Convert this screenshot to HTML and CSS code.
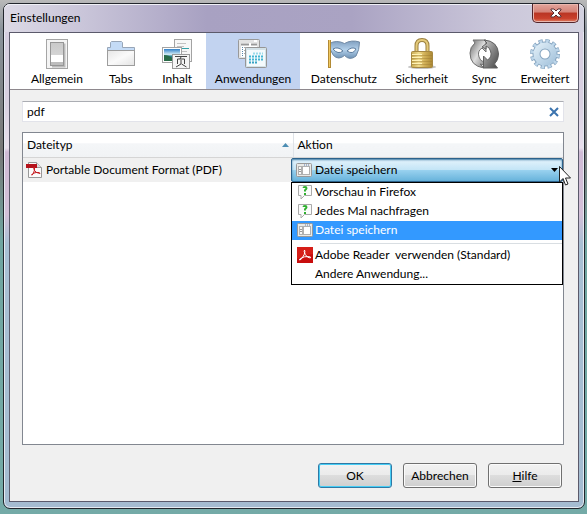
FILE: index.html
```html
<!DOCTYPE html>
<html lang="de">
<head>
    <meta charset="UTF-8">
    <meta name="viewport" content="width=device-width, initial-scale=1.0">
    <title>Einstellungen</title>
    <link rel="stylesheet" href="styles.css">
</head>
<body>

<!-- shared icons -->
<svg class="defs" aria-hidden="true">
  <symbol id="icon-save" viewBox="0 0 16 16">
    <rect x="0.5" y="1.5" width="15" height="13" rx="1" fill="#e9e9e6" stroke="#999" />
    <path d="M8 3h1M10 3h1M12 3h1" stroke="#5c7fb5" />
    <rect x="2.5" y="4.5" width="3" height="8" fill="#f7f7f7" stroke="#b0b0b0" />
    <path d="M3 7.500h2M3 9.500h2" stroke="#999" />
    <rect x="6.500" y="4.500" width="7" height="8" fill="#fff" stroke="#b0b0b0" />
  </symbol>
  <symbol id="icon-ask" viewBox="0 0 16 16">
    <path d="M1.500 1.500h13v10h-7l-3.500 3.500v-3.500h-2.500z" fill="#fbfbfb" stroke="#aaa" />
    <path d="M6.500 4q0-1 1.500-1t1.500 1.200q0 .8-1.500 2v1.300" fill="none" stroke="#2fb02f" stroke-width="2" />
    <path d="M7 9h2v2h-2z" fill="#2fb02f" />
  </symbol>
  <symbol id="icon-reader" viewBox="0 0 16 16">
    <rect width="16" height="16" fill="#c80d0d" />
    <path d="M0 0h16v7q-8 1-16 5z" fill="#df2a20" opacity=".6" />
    <path d="M7.500 3q-1 1 .8 4.500 2 3.500 5 3.500 1.500-.8-1.500-1.500-4.500-.3-8.500 2-1.800 1.800-.3 1.500 2-.8 4.200-5.500 1.300-3.500.3-4.500z" fill="none" stroke="#fff" />
  </symbol>
</svg>

<main class="window">
  <header class="titlebar">
    <h1>Einstellungen</h1>
    <button class="close" type="button" aria-label="Schließen">
      <svg width="12" height="10" viewBox="0 0 12 10">
        <path d="M1 1h3l2 2 2-2h3v1l-3 3 3 3v1h-3l-2-2-2 2h-3v-1l3-3-3-3z" fill="#fff" stroke="#5b3035" />
      </svg>
    </button>
  </header>

  <div class="content">
    <nav class="toolbar">
      <button class="tab" type="button">
        <svg width="32" height="32" viewBox="0 0 32 32">
          <defs>
            <linearGradient id="switch" x2="0" y2="1">
              <stop offset="0" stop-color="#c9c9c9" />
              <stop offset="1" stop-color="#dedede" />
            </linearGradient>
          </defs>
          <rect x="5.500" y="1.500" width="21" height="29" fill="#f4f4f4" stroke="#a5a5a5" />
          <path d="M11 28.500h12.500v-23" fill="none" stroke="#bbb" stroke-width="2" />
          <rect x="9.500" y="4.500" width="13" height="23" fill="url(#switch)" stroke="#969696" />
          <path d="M10 17h12v7h-12z" fill="#fff" />
          <path d="M10 24h12v3h-12z" fill="#bdbdbd" />
        </svg>
        Allgemein
      </button>
      <button class="tab" type="button">
        <svg width="32" height="32" viewBox="0 0 32 32">
          <defs>
            <linearGradient id="folder" x2="1" y2="1">
              <stop offset="0" stop-color="#e6e6e6" />
              <stop offset=".5" stop-color="#fafafa" />
              <stop offset="1" stop-color="#e3e3e3" />
            </linearGradient>
          </defs>
          <path d="M2.500 13v-3.500h3v-5l1-1h10l1 1v5h12v3.500" fill="#c4dbf6" stroke="#98a6b8" />
          <rect x="2.500" y="12.500" width="27" height="15" fill="url(#folder)" stroke="#9d9d9d" />
        </svg>
        Tabs
      </button>
      <button class="tab" type="button">
        <svg width="32" height="32" viewBox="0 0 32 32">
          <defs>
            <linearGradient id="photo" x2="0" y2="1">
              <stop offset="0" stop-color="#2f7fc8" />
              <stop offset=".45" stop-color="#d5edf5" />
              <stop offset=".6" stop-color="#2d8699" />
              <stop offset="1" stop-color="#174e6e" />
            </linearGradient>
          </defs>
          <rect x="13.500" y="1.500" width="17" height="22" fill="#f7f7f7" stroke="#a3a3a3" />
          <path d="M16 5.500h9M16 8.500h7M20 13.500h6" stroke="#c2c2c2" />
          <path d="M20 10.500h8" stroke="#35a1a8" />
          <rect x="1.500" y="9.500" width="19" height="15" fill="#fff" stroke="#a3a3a3" />
          <rect x="3" y="11" width="16" height="12" fill="url(#photo)" />
          <path d="M3 17q5 0 8 3l8 1v2h-16z" fill="#286b47" />
          <rect x="11.500" y="16.500" width="17" height="14" fill="#f5f5f5" stroke="#999" />
          <path d="M14 18.500h12M20 19l-1 2M16.500 26v-5h7v5M20 22v4l-5 3M20.500 26l5 3" fill="none" stroke="#444" />
        </svg>
        Inhalt
      </button>
      <button class="tab selected" type="button" aria-current="page">
        <svg width="32" height="32" viewBox="0 0 32 32">
          <rect x="1.500" y="1.500" width="21" height="19" rx="1" fill="#e3e3e3" stroke="#999" />
          <rect x="4" y="5" width="16" height="14" fill="#fff" />
          <path d="M17 3h3" stroke="#fff" stroke-width="2" />
          <path d="M4 6.500h16" stroke="#999" stroke-width="2" stroke-dasharray="8 2" />
          <path d="M5.500 9v9" stroke="#5686ac" stroke-dasharray="1 1" />
          <path d="M7 9.500h3M7 12.500h2M7 15.500h3" stroke="#aaa" />
          <rect x="8.500" y="9.500" width="21" height="20" rx="1" fill="#d4e2e8" stroke="#969696" />
          <rect x="10" y="12" width="18" height="16" fill="#f4fafc" />
          <path d="M16 15.500h10" stroke="#9bdbeb" stroke-width="2" stroke-dasharray="2 1" />
          <path d="M12 18.500h14M12 21.500h14" stroke="#43b5d3" stroke-width="2" stroke-dasharray="2 1" />
          <path d="M12 24.500h8" stroke="#37a3c4" stroke-width="2" stroke-dasharray="2 1" />
        </svg>
        Anwendungen
      </button>
      <button class="tab" type="button">
        <svg width="32" height="32" viewBox="0 0 32 32">
          <defs>
            <linearGradient id="mask" x2="0" y2="1">
              <stop offset="0" stop-color="#809fc0" />
              <stop offset=".5" stop-color="#b3d0ea" />
              <stop offset="1" stop-color="#6e92b5" />
            </linearGradient>
          </defs>
          <path d="M1.500 5.500q7-4 15 0 7-4 15-1.500 0 8-3.500 14-6 5-11.500-.500-6 5-11 0-4-5-4-12z" fill="url(#mask)" stroke="#7089a5" />
          <path d="M5 11q5-3 10 2-5 4-10-2zM19 13q5-5 9-2-3 6-9 2z" fill="#fff" stroke="#5c7c9e" />
          <path d="M1.500 2v28" stroke="#b28a35" stroke-width="3" />
          <path d="M1.500 2v27" stroke="#f0c860" />
        </svg>
        Datenschutz
      </button>
      <button class="tab" type="button">
        <svg width="32" height="32" viewBox="0 0 32 32">
          <defs>
            <linearGradient id="brass" x2="1" y2="0">
              <stop offset="0" stop-color="#c8a94e" />
              <stop offset=".35" stop-color="#f1dc8e" />
              <stop offset=".6" stop-color="#d4b35a" />
              <stop offset="1" stop-color="#ab8835" />
            </linearGradient>
          </defs>
          <ellipse cx="16" cy="29" rx="14" ry="2" fill="#c4c4c4" />
          <path d="M10.500 14v-6q0-6 5.500-6t5.500 6v6" fill="none" stroke="#9b8040" stroke-width="4" />
          <path d="M10.500 14v-6q0-6 5.500-6t5.500 6v6" fill="none" stroke="#e4ca7a" stroke-width="2" />
          <rect x="5.500" y="13.500" width="21" height="16" rx="1" fill="url(#brass)" stroke="#a68842" />
          <path d="M6 17.500h20M6 20.500h20M6 23.500h20M6 26.500h20" stroke="#9a7930" opacity=".4" />
          <path d="M6 16.500h10M6 19.500h10M6 22.500h10M6 25.500h10" stroke="#fff2b5" />
        </svg>
        Sicherheit
      </button>
      <button class="tab" type="button">
        <svg width="32" height="32" viewBox="0 0 32 32">
          <defs>
            <linearGradient id="steel" x2="1" y2="1">
              <stop offset="0" stop-color="#666" />
              <stop offset=".5" stop-color="#ddd" />
              <stop offset="1" stop-color="#777" />
            </linearGradient>
            <linearGradient id="steel-dark" x2="1" y2="1">
              <stop offset="0" stop-color="#d8d8d8" />
              <stop offset=".5" stop-color="#888" />
              <stop offset="1" stop-color="#444" />
            </linearGradient>
          </defs>
          <path d="M16 30q-14-2-14-15 0-6 5-10l-2-3h13v12l-4-4q-5 3-3 9 1 4 5 5v3l-4-1z" fill="url(#steel)" stroke="#707070" />
          <path d="M16 2q14 1 14.500 14 0 6-4 10l3 4h-14v-12l4 4q5-3 3-9-1-4-4.500-5v3l-4-2 5-4z" fill="url(#steel-dark)" stroke="#606060" />
        </svg>
        Sync
      </button>
      <button class="tab" type="button">
        <svg width="32" height="32" viewBox="0 0 32 32">
          <defs>
            <linearGradient id="gear" x2="1" y2="1">
              <stop offset="0" stop-color="#dcebf5" />
              <stop offset="1" stop-color="#a9c6de" />
            </linearGradient>
          </defs>
          <circle cx="16" cy="16" r="12.500" fill="none" stroke="#86a5c0" stroke-width="5" stroke-dasharray="4 2.545" />
          <circle cx="16" cy="16" r="8.500" fill="none" stroke="#86a5c0" stroke-width="8" />
          <circle cx="16" cy="16" r="12" fill="none" stroke="#bdd6ea" stroke-width="5" stroke-dasharray="2.400 3.883" stroke-dashoffset="-.7" />
          <circle cx="16" cy="16" r="8.500" fill="none" stroke="url(#gear)" stroke-width="6" />
        </svg>
        Erweitert
      </button>
    </nav>

    <section class="pane">
      <div class="search">
        <input type="text" value="pdf" aria-label="Suchen">
        <button class="clear" type="button" aria-label="Suche löschen">
          <svg width="10" height="10" viewBox="0 0 10 10">
            <path d="M1 1l8 8M9 1l-8 8" stroke="#3b73ae" stroke-width="2" />
          </svg>
        </button>
      </div>

      <div class="list">
        <table>
          <thead>
            <tr>
              <th class="col-type" scope="col" aria-sort="ascending">
                <div class="heading">
                  Dateityp
                  <svg width="7" height="4" viewBox="0 0 7 4"><path d="M0 4l3.500-4 3.500 4z" fill="#4b8db3" /></svg>
                </div>
              </th>
              <th scope="col">Aktion</th>
            </tr>
          </thead>
          <tbody>
            <tr>
              <td>
                <div class="filetype">
                  <svg width="16" height="16" viewBox="0 0 16 16">
                    <path d="M2.500.5h8l5 5v10h-13z" fill="#fbfbfb" stroke="#999" />
                    <path d="M10.500.5v5h5" fill="#ddd" stroke="#999" />
                    <path d="M0 2h11v4h-11z" fill="#b5121b" />
                    <path d="M8 5q-1 1 .5 3.500t5.500 3q.5-1.500-4-1-3.500.5-4.500 2.500.500 1 2-2t1-6z" fill="none" stroke="#c41a20" />
                  </svg>
                  Portable Document Format (PDF)
                </div>
              </td>
              <td>
                <div class="action">
                  <svg class="action-icon" width="16" height="16"><use href="#icon-save" /></svg>
                  <select aria-label="Aktion">
                    <option>Datei speichern</option>
                  </select>
                  <svg class="arrow" width="7" height="4" viewBox="0 0 7 4"><path d="M0 0h7l-3.500 4z" fill="#000" /></svg>

                  <ul class="menu">
                    <li><button type="button"><svg width="16" height="16"><use href="#icon-ask" /></svg>Vorschau in Firefox</button></li>
                    <li><button type="button"><svg width="16" height="16"><use href="#icon-ask" /></svg>Jedes Mal nachfragen</button></li>
                    <li><button class="active" type="button"><svg width="16" height="16"><use href="#icon-save" /></svg>Datei speichern</button></li>
                    <li class="separator" role="separator"></li>
                    <li><button type="button"><svg width="16" height="16"><use href="#icon-reader" /></svg>Adobe Reader&nbsp; verwenden (Standard)</button></li>
                    <li><button class="no-icon" type="button">Andere Anwendung...</button></li>
                  </ul>

                  <svg class="cursor" width="12" height="20" viewBox="0 0 12 20">
                    <path d="M.5.5v15.500l3.500-3.500 2.500 6.500 2.500-1-2.500-6h5z" fill="#fff" stroke="#222" />
                  </svg>
                </div>
              </td>
            </tr>
          </tbody>
        </table>
      </div>

      <footer class="buttons">
        <button class="btn default" type="button">OK</button>
        <button class="btn" type="button">Abbrechen</button>
        <button class="btn" type="button" accesskey="h"><u>H</u>ilfe</button>
      </footer>
    </section>
  </div>
</main>

</body>
</html>
```
FILE: styles.css
```css
:root {
    --clr-dialog: #f0f0f0;
    --clr-border: #828790;
    --clr-selected: #c2d3f0;
    --clr-highlight: #3399ff;
}

* {
    box-sizing: border-box;
}

body {
    margin: 0;
    min-height: 100vh;
    display: flex;
    padding: 3px 2px 5px 3px;
    font-family: Lato, "Open Sans", sans-serif;
    font-size: 12px;
    line-height: 16px;
    color: #000;
    background: linear-gradient(#b9b9b9 0, #8a939b 30px, #777 150px, #6fa5a0 240px, #74aaa7);
}

button,
input,
select {
    font: inherit;
    color: inherit;
}

button {
    padding: 0;
    border: 0;
    background: none;
}

svg {
    display: block;
    flex: none;
}

.defs {
    position: absolute;
    width: 0;
    height: 0;
}

/* window frame */

.window {
    flex: 1;
    display: flex;
    flex-direction: column;
    padding: 0 5px 6px;
    border: 1px solid #22262c;
    border-radius: 7px;
    background: linear-gradient(#d5cee0 0, #d8d0e0 100px, #e8dfec 144px, #cfbbd5 148px, #d3c0d8 210px, #a9c0d4 240px, #a5bcd1);
    box-shadow: inset 0 0 0 1px #e6eaf2;
}

.titlebar {
    display: flex;
    justify-content: space-between;
    margin: 0 -5px;
    height: 28px;
    padding: 0 5px 0 6px;
    border-radius: 6px 6px 0 0;
    background: linear-gradient(90deg, #dcd9e5, #c9c5d9 80px, #a8a1c2 35%, #aaa3c3 60%, #cbc7da 85%, #d3d2e0);
    box-shadow: inset 0 1px #f0f0f6;
}

.titlebar h1 {
    margin: 0;
    font-size: 12px;
    font-weight: normal;
    line-height: 28px;
}

.close {
    display: grid;
    place-items: center;
    width: 47px;
    height: 19px;
    border: 1px solid #53252b;
    border-top: 0;
    border-radius: 0 0 5px 5px;
    background: linear-gradient(#e2a59c, #d58377 45%, #b93523 50%, #c9412c 80%, #de8064);
    box-shadow: inset 0 0 0 1px #eab7ae;
}

.content {
    flex: 1;
    display: flex;
    flex-direction: column;
    border: 1px solid #5b5a6b;
    background: var(--clr-dialog);
}

/* category buttons */

.toolbar {
    display: grid;
    grid-template-columns: 72fr 56fr 57fr 95fr 87fr 69fr 56fr 66fr;
    height: 57px;
    padding-left: 11px;
    border-bottom: 1px solid #8e888d;
    background: #fff;
}

.tab {
    display: flex;
    flex-direction: column;
    align-items: center;
    gap: 1px;
    padding-top: 5px;
    white-space: nowrap;
}

.selected {
    background: var(--clr-selected);
}

/* pane */

.pane {
    flex: 1;
    display: flex;
    flex-direction: column;
    padding: 11px 14px 13px 12px;
}

.search {
    display: flex;
    align-items: center;
    height: 21px;
    padding: 0 4px;
    border: 1px solid #e2e3ea;
    border-top-color: #abadb3;
    background: #fff;
}

.search input {
    flex: 1;
    min-width: 0;
    padding: 0;
    border: 0;
    outline: 0;
    background: none;
}

.list {
    flex: 1;
    margin-top: 10px;
    border: 1px solid var(--clr-border);
    background: #fff;
}

table {
    width: 100%;
    border-collapse: collapse;
    table-layout: fixed;
}

th {
    height: 24px;
    padding: 0 4px;
    border-bottom: 1px solid #d5d5d5;
    font-weight: normal;
    text-align: left;
    background: linear-gradient(#fff 40%, #f4f6f8 45%, #f1f3f5);
}

.col-type {
    width: 50%;
    border-right: 1px solid #dfe3e8;
}

.heading {
    display: flex;
    align-items: center;
    justify-content: space-between;
}

td {
    padding: 0;
    background: var(--clr-dialog);
}

.filetype {
    display: flex;
    align-items: center;
    gap: 4px;
    padding-left: 3px;
    white-space: nowrap;
}

/* action drop-down */

.action {
    position: relative;
    margin-left: -2px;
}

.action select {
    display: block;
    width: 100%;
    height: 24px;
    padding: 0 20px 0 23px;
    border: 1px solid #2c628b;
    border-radius: 2px;
    outline: 0;
    appearance: none;
    background: linear-gradient(#e5f4fc, #c4e5f6 48%, #98d1ef 52%, #68b3db);
    box-shadow: inset 0 1px 2px #3d7ba5;
}

.action-icon,
.arrow,
.cursor {
    position: absolute;
    pointer-events: none;
}

.action-icon {
    top: 4px;
    left: 5px;
}

.arrow {
    top: 10px;
    right: 5px;
}

.cursor {
    top: 8px;
    right: -8px;
}

.menu {
    position: absolute;
    top: 100%;
    left: 0;
    right: 0;
    margin: 0;
    padding: 0;
    border: 1px solid #000;
    list-style: none;
    background: #fff;
}

.menu button {
    display: flex;
    align-items: center;
    gap: 2px;
    width: 100%;
    height: 19px;
    padding-left: 5px;
    white-space: nowrap;
}

.menu .no-icon {
    padding-left: 23px;
}

.menu .active {
    color: #fff;
    background: var(--clr-highlight);
}

.separator {
    height: 1px;
    margin: 3px 0 2px 28px;
    background: #d9dee2;
}

/* dialog buttons */

.buttons {
    display: flex;
    justify-content: flex-end;
    gap: 11px;
    padding: 18px 2px 0 0;
}

.btn {
    width: 74px;
    height: 25px;
    border: 1px solid #707070;
    border-radius: 3px;
    background: linear-gradient(#f2f2f2, #ebebeb 48%, #dddddd 50%, #cfcfcf);
    box-shadow: inset 0 0 0 1px #fbfbfb;
}

.default {
    border-color: #2f79a5;
    box-shadow: inset 0 0 0 1px #46cdf5;
}
```
